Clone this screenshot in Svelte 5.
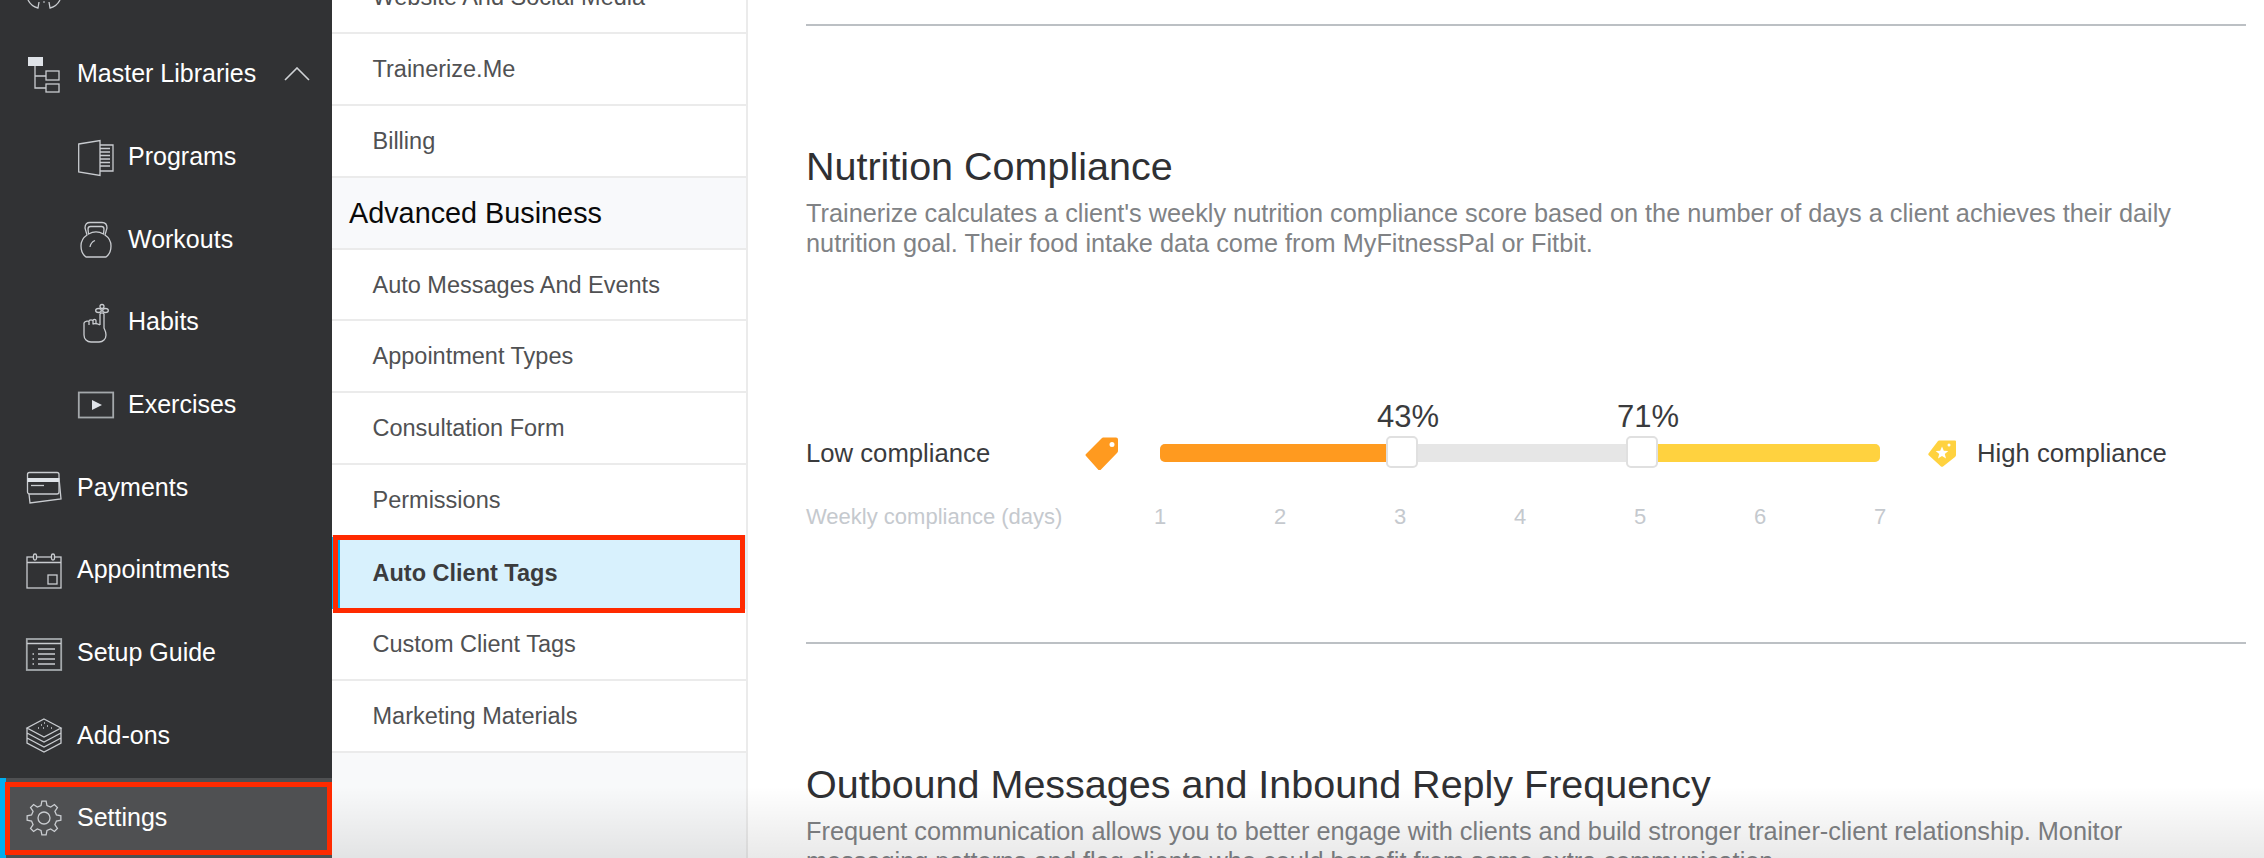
<script>
	const libraries = [
		{ name: 'Programs', icon: 'programs' },
		{ name: 'Workouts', icon: 'workouts' },
		{ name: 'Habits', icon: 'habits' },
		{ name: 'Exercises', icon: 'exercises' }
	];
	const mainNav = [
		{ name: 'Payments', icon: 'payments' },
		{ name: 'Appointments', icon: 'appointments' },
		{ name: 'Setup Guide', icon: 'guide' },
		{ name: 'Add-ons', icon: 'addons' }
	];
	const settingsNav = [
		{ name: 'Website And Social Media' },
		{ name: 'Trainerize.Me' },
		{ name: 'Billing' },
		{ name: 'Advanced Business', header: true },
		{ name: 'Auto Messages And Events' },
		{ name: 'Appointment Types' },
		{ name: 'Consultation Form' },
		{ name: 'Permissions' },
		{ name: 'Auto Client Tags', active: true },
		{ name: 'Custom Client Tags' },
		{ name: 'Marketing Materials' }
	];

	const days = [1, 2, 3, 4, 5, 6, 7];
	const dayWidth = 120;
	const low = { day: 3, pct: '43%' };
	const high = { day: 5, pct: '71%' };
	const thumbLeft = (day) => (day - 1) * dayWidth + 2;

	// 8 tooth cog, drawn around 18,18
	function gearPath() {
		const pts = [];
		const teeth = 8;
		for (let i = 0; i < teeth; i++) {
			const a = (i / teeth) * Math.PI * 2 - Math.PI / 2;
			const step = (Math.PI * 2) / teeth;
			const corners = [
				[12.8, a - step * 0.3],
				[17, a - step * 0.16],
				[17, a + step * 0.16],
				[12.8, a + step * 0.3]
			];
			for (const [r, t] of corners) {
				pts.push((18 + r * Math.cos(t)).toFixed(2) + ' ' + (18 + r * Math.sin(t)).toFixed(2));
			}
		}
		return 'M' + pts.join(' L') + ' Z';
	}
</script>

{#snippet icon(name)}
	<svg class="icon" viewBox="0 0 36 36" aria-hidden="true">
		{#if name === 'top'}
			<path d="M2 27 C4 31 8 34 12 35 L13 29 M34 27 C32 31 28 34 24 35 L23 29" />
			<circle cx="18" cy="29" r="0.8" class="solid" />
		{:else if name === 'tree'}
			<rect x="2" y="1" width="15" height="9" class="solid" />
			<path d="M9 10 V32 H20 M9 20 H20" />
			<rect x="20" y="15" width="13" height="9" />
			<rect x="20" y="28" width="13" height="8" />
		{:else if name === 'programs'}
			<path d="M0.7 5 L22 1.5 V36.5 L0.7 33 Z" />
			<path d="M22 6 H35 V32 H22 M22 9.5 H32 M22 13 H32 M22 16.5 H32 M22 20 H32 M22 23.5 H32 M22 27 H32" />
		{:else if name === 'workouts'}
			<path d="M8 36 C4 33 3 29 3 25 C3 20 6 16 9 14 L7 7 C7 3 9 1.5 12 1.5 H24 C27 1.5 29 3 29 7 L27 14 C30 16 33 20 33 25 C33 29 32 33 28 36 Z" />
			<path d="M10.5 13 L10 8 Q10 5.5 12.5 5.5 H23.5 Q26 5.5 26 8 L25.5 13 C21 10.5 15 10.5 10.5 13 Z" />
			<path d="M12 26 C12.5 23 14.5 20.5 17 19.5" />
		{:else if name === 'habits'}
			<path d="M6 21 V31 C6 35 9 38 13 38 H21 C25 38 28 35 28 31 C28 28 27 26 26 24 V10 C26 8.5 22 8.5 22 10 V21 M22 21 C19 19.5 16.5 19.5 14.5 20 M18 20 V16.5 C18 15 15 15 15 16.5 V20 M15 17 C15 15.5 11 15.5 11 17 V21 M11 18 C11 16.5 7 17 6 19 V21" />
			<ellipse cx="20.5" cy="6.5" rx="2.8" ry="2" />
			<ellipse cx="27.5" cy="6.5" rx="2.8" ry="2" />
			<circle cx="24" cy="2.5" r="2" />
		{:else if name === 'exercises'}
			<rect x="0.8" y="5.5" width="34.4" height="25" class="thick" />
			<path d="M14 13 L24 18 L14 23 Z" class="solid" />
		{:else if name === 'payments'}
			<path d="M3 25 L4 34 L35 30 L33 9" />
			<rect x="1.5" y="3.5" width="31.5" height="21.5" rx="2" />
			<rect x="1.5" y="9" width="31.5" height="4" class="solid" />
			<path d="M5 16.5 H18" />
		{:else if name === 'appointments'}
			<rect x="1" y="5" width="34" height="31" />
			<path d="M1 10.5 H35" />
			<rect x="7.5" y="2" width="3" height="6" rx="1.5" class="filled-bg" />
			<rect x="25.5" y="2" width="3" height="6" rx="1.5" class="filled-bg" />
			<rect x="22" y="23" width="9" height="9" />
		{:else if name === 'guide'}
			<rect x="0.8" y="4" width="34.4" height="31" class="thick" />
			<path d="M1 8.5 H35 M12 14 H29 M12 19 H29 M12 24 H29 M12 29 H29 M6.5 19 H8 M6.5 24 H8 M6.5 29 H8" />
		{:else if name === 'addons'}
			<path d="M18 2 L35 11 L18 20 L1 11 Z" />
			<path d="M1 11 V26 L18 35 L35 26 V11 M1 16 L18 25 L35 16 M1 21 L18 30 L35 21" />
			<path d="M15 8 H16 M18 6 H19 M21 9 H22 M17 11 H18 M25 11 H26 M12 11 H13" />
		{:else if name === 'gear'}
			<path d={gearPath()} />
			<circle cx="18" cy="18" r="6" />
		{/if}
	</svg>
{/snippet}

<div class="page">
	<nav class="sidebar">
		<div class="side-list">
			<div class="side-row">{@render icon('top')}</div>
			<div class="side-row">
				{@render icon('tree')}
				<span>Master Libraries</span>
				<svg class="chevron" viewBox="0 0 26 14" aria-hidden="true"><path d="M1 13 L13 1 L25 13" /></svg>
			</div>
			{#each libraries as item}
				<div class="side-row sub">
					{@render icon(item.icon)}
					<span>{item.name}</span>
				</div>
			{/each}
			{#each mainNav as item}
				<div class="side-row">
					{@render icon(item.icon)}
					<span>{item.name}</span>
				</div>
			{/each}
			<div class="side-row current">
				{@render icon('gear')}
				<span>Settings</span>
			</div>
		</div>
	</nav>

	<aside class="subnav">
		<div class="sub-list">
			{#each settingsNav as item}
				<div class="sub-row" class:header={item.header} class:active={item.active}>{item.name}</div>
			{/each}
		</div>
	</aside>

	<main class="content">
		<hr />
		<section>
			<h2>Nutrition Compliance</h2>
			<p>Trainerize calculates a client's weekly nutrition compliance score based on the number of days a client achieves their daily nutrition goal. Their food intake data come from MyFitnessPal or Fitbit.</p>

			<div class="slider-row">
				<span class="end-label">Low compliance</span>
				<svg class="tag low" viewBox="0 0 33 33" aria-hidden="true">
					<path fill-rule="evenodd" d="M18 0.5 H31 Q33 0.5 33 2.5 V14 Q33 15 32 16 L15.5 33 Q14.5 34 13.5 33 L1 19 Q0 18 1 17 L16 2 Q17 0.5 18 0.5 Z M27 5 A2.5 2.5 0 1 0 27 10 A2.5 2.5 0 1 0 27 5 Z" />
				</svg>
				<div class="track">
					<div class="fill-low" style="width: {thumbLeft(low.day)}px"></div>
					<div class="fill-high" style="left: {thumbLeft(high.day)}px"></div>
					{#each [low, high] as thumb}
						<div class="thumb" style="left: {thumbLeft(thumb.day)}px"><span>{thumb.pct}</span></div>
					{/each}
				</div>
				<svg class="tag high" viewBox="0 0 28 27" aria-hidden="true">
					<path fill-rule="evenodd" d="M11 0.5 H27 Q28 0.5 28 1.5 V15 Q28 16 27 17 L15 26.5 Q14 27 13 26.5 L0.5 15 Q0 14 0.5 13.5 L10 1 Q10.5 0.5 11 0.5 Z M21 3.5 A1.5 1.5 0 1 0 21 6.5 A1.5 1.5 0 1 0 21 3.5 Z" />
					<path class="star" d="M14 6.5 L15.8 10.8 L20.3 11.1 L16.8 14 L18 18.4 L14 16 L10 18.4 L11.2 14 L7.7 11.1 L12.2 10.8 Z" />
				</svg>
				<span class="end-label">High compliance</span>
			</div>

			<div class="days-row">
				<span class="days-label">Weekly compliance (days)</span>
				<div class="days">
					{#each days as day}
						<span>{day}</span>
					{/each}
				</div>
			</div>
		</section>
		<hr class="second" />
		<section>
			<h2>Outbound Messages and Inbound Reply Frequency</h2>
			<p>Frequent communication allows you to better engage with clients and build stronger trainer-client relationship. Monitor messaging patterns and flag clients who could benefit from some extra communication.</p>
		</section>
	</main>

	<div class="fade"></div>
</div>

<style>
	:global(body) {
		margin: 0;
		background: #fff;
	}
	.page {
		position: relative;
		display: flex;
		height: 858px;
		width: 2264px;
		overflow: hidden;
		font-family: "Liberation Sans", Arial, sans-serif;
	}

	.sidebar {
		flex: 0 0 332px;
		background: #313234;
		overflow: hidden;
	}
	.side-list {
		margin-top: -50px;
	}
	.side-row {
		position: relative;
		display: flex;
		align-items: center;
		gap: 15px;
		height: 82.67px;
		padding-left: 26px;
		box-sizing: border-box;
		color: #fff;
		font-size: 25px;
	}
	.side-row.sub {
		padding-left: 78px;
		gap: 14px;
	}
	.side-row.current {
		background: #4f5052;
		border-left: 6px solid #00aeef;
		padding-left: 20px;
		height: 80.3px;
		margin-top: 1px;
	}
	.side-row.current::after {
		content: "";
		position: absolute;
		left: -1px;
		right: 0;
		top: 4px;
		bottom: 3px;
		border: 5px solid #ff2a00;
	}
	.icon {
		flex: 0 0 36px;
		width: 36px;
		height: 36px;
		overflow: visible;
		fill: none;
		stroke: #c9ccd0;
		stroke-width: 1.3;
	}
	.icon .solid {
		fill: #dfe3e8;
		stroke: none;
	}
	.icon .thick {
		stroke: #a4a8ab;
		stroke-width: 1.8;
	}
	.icon .filled-bg {
		fill: #313234;
	}
	.chevron {
		margin-left: auto;
		margin-right: 22px;
		width: 26px;
		height: 14px;
		fill: none;
		stroke: #d0d3d6;
		stroke-width: 1.6;
	}

	.subnav {
		flex: 0 0 414px;
		background: #f8f9fa;
		border-right: 2px solid #ebebeb;
		overflow: hidden;
	}
	.sub-list {
		margin-top: -38px;
	}
	.sub-row {
		display: flex;
		align-items: center;
		position: relative;
		box-sizing: border-box;
		height: 71.9px;
		padding: 1px 0 0 40.5px;
		background: #fff;
		border-bottom: 2px solid #ebebeb;
		color: #505153;
		font-size: 23.5px;
	}
	.sub-row.header {
		padding-left: 17px;
		background: #f8f9fb;
		color: #0a0a0a;
		font-size: 28.8px;
	}
	.sub-row.active {
		z-index: 1;
		padding: 0 0 0 32.5px;
		border-left: 8px solid #00aeef;
		border-bottom: 0;
		background: #d8f1fd;
		color: #3b3c3e;
		font-weight: 700;
	}
	.sub-row.active::after {
		content: "";
		position: absolute;
		left: -7px;
		right: 1px;
		top: -2px;
		bottom: -3.5px;
		border: 5px solid #ff2a00;
	}

	.content {
		flex: 1;
		padding: 24px 18px 0 58px;
		min-width: 0;
	}
	hr {
		margin: 0;
		border: 0;
		height: 2px;
		background: #bcc0c4;
	}
	hr.second {
		margin-top: 110px;
	}
	h2 {
		margin: 117px 0 9px;
		font-size: 39.5px;
		line-height: 46px;
		font-weight: 400;
		color: #2f3033;
	}
	p {
		margin: 0;
		font-size: 25.3px;
		line-height: 30px;
		color: #808285;
	}

	.slider-row {
		display: flex;
		align-items: center;
		height: 34px;
		margin-top: 178px;
	}
	.end-label {
		font-size: 25.7px;
		color: #3a3b3d;
	}
	.slider-row .end-label:first-child {
		flex: 0 0 279px;
	}
	.tag {
		flex: none;
	}
	.tag.low {
		width: 33px;
		height: 33px;
		fill: #ff9a1f;
	}
	.tag.high {
		width: 28px;
		height: 27px;
		margin-right: 21px;
		fill: #ffd23f;
	}
	.star {
		fill: #fff;
	}
	.track {
		position: relative;
		flex: 0 0 720px;
		height: 18px;
		margin: 0 48px 0 42px;
		border-radius: 5px;
		background: #e6e6e6;
	}
	.fill-low,
	.fill-high {
		position: absolute;
		top: 0;
		bottom: 0;
	}
	.fill-low {
		left: 0;
		background: #ff9a1f;
		border-radius: 5px 0 0 5px;
	}
	.fill-high {
		right: 0;
		background: #ffd23f;
		border-radius: 0 5px 5px 0;
	}
	.thumb {
		position: absolute;
		top: -8px;
		width: 32px;
		height: 32px;
		margin-left: -16px;
		box-sizing: border-box;
		background: #fff;
		border: 2px solid #e0e0e0;
		border-radius: 5px;
	}
	.thumb span {
		position: absolute;
		left: 50%;
		bottom: 31px;
		transform: translateX(calc(-50% + 6px));
		font-size: 31px;
		line-height: 36px;
		color: #3a3b3d;
	}

	.days-row {
		display: flex;
		align-items: center;
		height: 30px;
		margin-top: 32px;
		font-size: 22px;
		color: #c5c9ce;
	}
	.days-label {
		flex: 0 0 334px;
	}
	.days {
		flex: 0 0 760px;
		display: flex;
		justify-content: space-between;
	}
	.days span {
		width: 40px;
		text-align: center;
	}

	.fade {
		position: absolute;
		left: 332px;
		right: 0;
		bottom: 0;
		height: 72px;
		background: linear-gradient(rgba(0, 0, 0, 0), rgba(0, 0, 0, 0.085));
		pointer-events: none;
	}
</style>
